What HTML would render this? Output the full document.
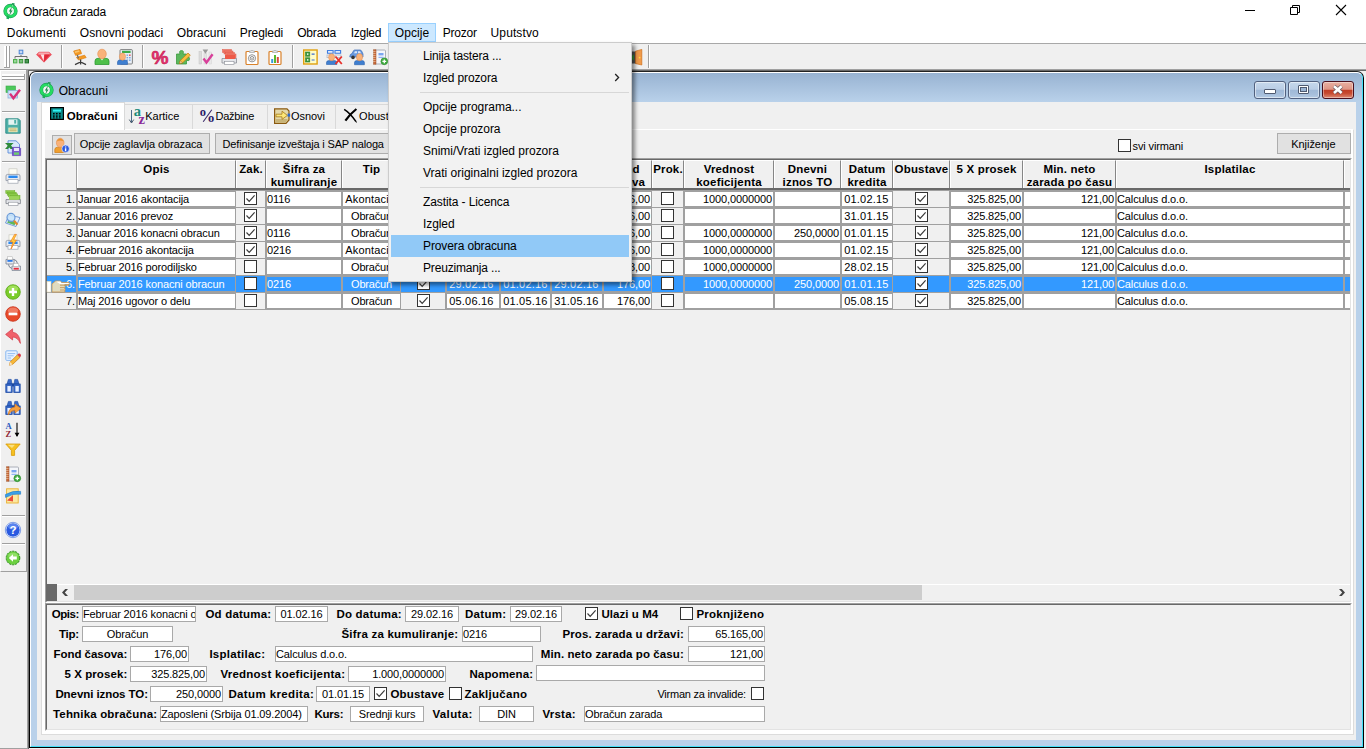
<!DOCTYPE html><html><head><meta charset="utf-8"><title>Obračun zarada</title><style>
*{box-sizing:border-box}
html,body{margin:0;padding:0}
body{width:1366px;height:749px;position:relative;overflow:hidden;background:#f0f0f0;font-family:"Liberation Sans",sans-serif;color:#000;font-size:11px}
.a{position:absolute}
.t{position:absolute;white-space:nowrap;font-size:11px;line-height:14px;height:14px;letter-spacing:-.12px}
.s{position:absolute;white-space:nowrap;font-size:12px;line-height:16px;height:16px;letter-spacing:-.1px}
.b{font-weight:bold;font-size:11.5px;letter-spacing:.18px}
.r{text-align:right}
.c{text-align:center}
.w{color:#fff}
.ic{position:absolute;width:16px;height:16px;overflow:visible}
.inp{position:absolute;background:#fff;border:1px solid #a9a9a9;height:16px}
.cb{position:absolute;width:13px;height:13px;background:#fff;border:1px solid #333}
.btn{position:absolute;background:#e1e1e1;border:1px solid #adadad}
.hc{position:absolute;top:160px;height:28px;background:#f0f0f0;border-left:1px solid #fff;border-top:1px solid #fff;border-right:1px solid #868686}
.hl{position:absolute;left:-4px;right:-4px;text-align:center;font-weight:bold;font-size:11.5px;letter-spacing:.18px;line-height:13px;white-space:nowrap}
.cell{position:absolute;height:14px;background:#fff}
.sel{background:#3399ff;color:#fff}
.mi{position:absolute;left:3px;width:238px;height:22px;line-height:22px;font-size:12px;padding-left:32px;white-space:nowrap;letter-spacing:-.1px}
</style></head><body>
<div class="a" style="left:0;top:0;width:1366px;height:43px;background:#fff"></div>
<div class="a" style="left:0;top:43px;width:1366px;height:1px;background:#a8a8a8"></div>
<svg class="ic" style="left:3px;top:3px;width:16px" width="16" height="16" viewBox="0 0 16 16"><circle cx="7.5" cy="8" r="5.2" fill="none" stroke="#1f9d57" stroke-width="3.9"/><circle cx="7.5" cy="8" r="5.2" fill="none" stroke="#25dc62" stroke-width="2.7"/><ellipse cx="7.5" cy="8" rx="3.2" ry="3.7" fill="#f4f8f4"/><path d="M8.9 0 L11.6 0.2 L11.2 4 L8.6 2.6Z" fill="#1f9d57"/><path d="M9.6 1.4 L10.8 3.4 L8.6 3.6Z" fill="#7ff0a0"/><path d="M6 16.2 L3.4 15.8 L3.8 12 L6.4 13.6Z" fill="#1fae5a"/><path d="M9 3.6 L5.8 8.4 L7.4 8.4 L6.2 12.8 L9.6 7.4 L8 7.4Z" fill="#2a8a54"/></svg>
<div class="s " style="left:23px;top:4px;letter-spacing:-0.225px;">Obračun zarada</div>
<svg class="a" style="left:1230px;top:0" width="136" height="22" viewBox="0 0 136 22"><path d="M15 10.5h10" stroke="#000" stroke-width="1"/><path d="M60.5 7.5h7v7h-7z M62.5 7.5v-2h7v7h-2" fill="none" stroke="#000" stroke-width="1"/><path d="M106 5l10 10M116 5l-10 10" stroke="#000" stroke-width="1.1"/></svg>
<div class="a" style="left:388px;top:23px;width:48px;height:19px;background:#cce8ff;border:1px solid #99d1ff"></div>
<div class="s " style="left:6.8px;top:25px;letter-spacing:0.216px;">Dokumenti</div>
<div class="s " style="left:79.8px;top:25px;letter-spacing:0.042px;">Osnovni podaci</div>
<div class="s " style="left:176.8px;top:25px;letter-spacing:0.076px;">Obracuni</div>
<div class="s " style="left:239.8px;top:25px;letter-spacing:-0.091px;">Pregledi</div>
<div class="s " style="left:297.2px;top:25px;letter-spacing:-0.187px;">Obrada</div>
<div class="s " style="left:350.8px;top:25px;letter-spacing:-0.287px;">Izgled</div>
<div class="s " style="left:394.8px;top:25px;letter-spacing:0.081px;">Opcije</div>
<div class="s " style="left:442.7px;top:25px;letter-spacing:-0.190px;">Prozor</div>
<div class="s " style="left:490.6px;top:25px;letter-spacing:0.106px;">Uputstvo</div>
<div class="a" style="left:0;top:44px;width:1366px;height:26px;background:#f0f0f0"></div>
<div class="a" style="left:4px;top:46px;width:3px;height:22px;background:#fff;border-right:1px solid #a0a0a0;border-bottom:1px solid #a0a0a0"></div>
<div class="a" style="left:7px;top:46px;width:3px;height:22px;background:#fff;border-right:1px solid #a0a0a0;border-bottom:1px solid #a0a0a0"></div>
<svg class="ic" style="left:13px;top:49px;width:16px" width="16" height="16" viewBox="0 0 16 16"><rect x="6.2" y="1.2" width="3.6" height="3.6" fill="#c8d8f4" stroke="#4a86d6" stroke-width="1"/><path d="M8 6v1.5M2 9.6V7.5h12V9.6" fill="none" stroke="#707070" stroke-width="1"/><rect x="0.5" y="10.5" width="3.4" height="3.4" fill="#9ad89a" stroke="#4cae4c" stroke-width="1"/><rect x="6.3" y="10.5" width="3.4" height="3.4" fill="#7cc47c" stroke="#3c9a3c" stroke-width="1"/><rect x="12.1" y="10.5" width="3.4" height="3.4" fill="#4c9a54" stroke="#1d7028" stroke-width="1"/></svg>
<svg class="ic" style="left:36px;top:49px;width:16px" width="16" height="16" viewBox="0 0 16 16"><path d="M0.5 5.6 L3 3.2 L13 3.2 L15.5 5.6 L8 13.2 Z" fill="#f04a55" stroke="#e84050" stroke-width=".6"/><path d="M3.2 3.6 L12.8 3.6 L14.4 5.4 L1.6 5.4Z" fill="#f8a8ae"/><path d="M4.6 5.4 L7.6 12 L8.4 5.4Z" fill="#fde4e6"/><path d="M8.4 5.4 L8 12.4 L14 5.6Z" fill="#e02838"/></svg>
<div class="a" style="left:61px;top:45px;width:1px;height:23px;background:#a0a0a0"></div><div class="a" style="left:62px;top:45px;width:1px;height:23px;background:#fff"></div>
<svg class="ic" style="left:72px;top:49px;width:16px" width="16" height="16" viewBox="0 0 16 16"><path d="M1.6 2 L8 0.4 L9.6 4.6 L3.6 6.4Z" fill="#f59a23" stroke="#d97400" stroke-width=".6"/><path d="M2.6 2.4 L7 1.2 L7.6 2.8 L3.2 4Z" fill="#fbc46a"/><path d="M4.4 8.4 L12.6 6.2 L14.2 8.6 L6.6 11Z" fill="#f59a23" stroke="#d97400" stroke-width=".6"/><path d="M8.6 10.6v2.6M3 15.6 L8.6 13 L14 15.6M8.6 13v2.6" fill="none" stroke="#3a3a3a" stroke-width="1.3"/><path d="M5.4 6 L6.4 9.4" stroke="#666" stroke-width="1.2"/></svg>
<svg class="ic" style="left:94px;top:49px;width:16px" width="16" height="16" viewBox="0 0 16 16"><path d="M1 15.5 V12 Q1 9.5 4 9.3 L12 9.3 Q15 9.5 15 12 V15.5Z" fill="#4fc04a" stroke="#2e9a35" stroke-width=".8"/><path d="M6.5 9.3 L8 11.5 L9.5 9.3Z" fill="#fff"/><ellipse cx="8" cy="5" rx="4.3" ry="4.8" fill="#f9b27a" stroke="#e58f4f" stroke-width=".6"/></svg>
<svg class="ic" style="left:117px;top:49px;width:16px" width="16" height="16" viewBox="0 0 16 16"><rect x="3" y="0.6" width="12.4" height="14.4" rx="1" fill="#e8eef6" stroke="#666" stroke-width=".8"/><rect x="5" y="1.8" width="8.6" height="2.2" fill="#3aaa4a"/><g fill="#7aa6e0"><rect x="9.5" y="5.5" width="1.6" height="1.4"/><rect x="12" y="5.5" width="1.6" height="1.4" fill="#e05050"/><rect x="9.5" y="8" width="1.6" height="1.4"/><rect x="12" y="8" width="1.6" height="1.4"/><rect x="9.5" y="10.5" width="1.6" height="1.4"/><rect x="12" y="10.5" width="1.6" height="1.4"/></g><path d="M0.5 15.5 V13 Q0.5 11 3 11 L8 11 Q10.5 11 10.5 13 V15.5Z" fill="#3f7fd0" stroke="#2b62ad" stroke-width=".6"/><ellipse cx="5.5" cy="7.6" rx="3.1" ry="3.6" fill="#f9b27a" stroke="#e58f4f" stroke-width=".5"/></svg>
<div class="a" style="left:142px;top:45px;width:1px;height:23px;background:#a0a0a0"></div><div class="a" style="left:143px;top:45px;width:1px;height:23px;background:#fff"></div>
<svg class="ic" style="left:152px;top:49px;width:16px" width="16" height="16" viewBox="0 0 16 16"><text x="8" y="14.5" font-family="Liberation Sans,sans-serif" font-weight="bold" font-size="18" text-anchor="middle" fill="#e8336f" stroke="#c01850" stroke-width=".5" textLength="17" lengthAdjust="spacingAndGlyphs">%</text></svg>
<svg class="ic" style="left:175px;top:49px;width:16px" width="16" height="16" viewBox="0 0 16 16"><path d="M1.5 5 H5 Q3.6 1.6 6.5 1.6 Q9.4 1.6 8 5 H11.5 V8.2 Q14.6 7 14.6 9.8 Q14.6 12.6 11.5 11.4 V15 H1.5Z" fill="#5cb85c" stroke="#3d9a40" stroke-width=".8"/><path d="M4.5 14.5 L5.3 11.6 L13 4 L15.3 6.3 L7.6 13.8Z" fill="#f6c040" stroke="#c07a10" stroke-width=".7"/><path d="M4.5 14.5 L5.3 11.6 L7.6 13.8Z" fill="#f8e0b0" stroke="#a06010" stroke-width=".5"/></svg>
<svg class="ic" style="left:198px;top:49px;width:16px" width="16" height="16" viewBox="0 0 16 16"><rect x="1" y="2.5" width="2.6" height="12.5" fill="#dcdcdc" stroke="#c4c4c4" stroke-width=".5"/><rect x="6" y="4" width="2.6" height="11" fill="#e4e4e4" stroke="#cfcfcf" stroke-width=".5"/><rect x="11" y="3" width="2.6" height="12" fill="#e8e8e8" stroke="#d4d4d4" stroke-width=".5"/><path d="M4.6 0.5 H10.2 L7.4 4.8Z" fill="#9a9a9a"/><path d="M5.5 9.5 L8.5 13.5 L14.6 5.2" fill="none" stroke="#d8409a" stroke-width="2.4"/></svg>
<svg class="ic" style="left:221px;top:49px;width:16px" width="16" height="16" viewBox="0 0 16 16"><g fill="#f07a6a" stroke="#e05a48" stroke-width=".5"><rect x="1.5" y="0.5" width="9" height="3"/><rect x="3" y="2" width="9" height="3"/><rect x="4.5" y="3.5" width="9" height="3"/><rect x="6" y="5" width="9" height="5"/></g><path d="M1 9.5 H15.5 V14 H1Z" fill="#e4e6ea" stroke="#8a8e96" stroke-width=".8"/><rect x="3.5" y="12.3" width="9.5" height="3" fill="#fff" stroke="#8a8e96" stroke-width=".6"/><rect x="4" y="6" width="10" height="4" fill="#ee5a48"/></svg>
<svg class="ic" style="left:244px;top:49px;width:16px" width="16" height="16" viewBox="0 0 16 16"><rect x="2" y="2.5" width="12" height="13" rx="1" fill="#fff" stroke="#d9822b" stroke-width="1.2"/><path d="M5.5 3.5 V2 H7 Q8 0 9 2 H10.5 V3.5Z" fill="#e8e8e8" stroke="#999" stroke-width=".6"/><circle cx="8" cy="9.3" r="3.6" fill="none" stroke="#777" stroke-width=".8"/><circle cx="8" cy="9.3" r="1.8" fill="none" stroke="#777" stroke-width=".8"/><circle cx="8" cy="9.3" r=".6" fill="#777"/></svg>
<svg class="ic" style="left:267px;top:49px;width:16px" width="16" height="16" viewBox="0 0 16 16"><rect x="2" y="2.5" width="12" height="13" rx="1" fill="#fff" stroke="#d9822b" stroke-width="1.2"/><path d="M5.5 3.5 V2 H7 Q8 0 9 2 H10.5 V3.5Z" fill="#e8e8e8" stroke="#999" stroke-width=".6"/><rect x="4.2" y="10" width="2" height="4" fill="#3a9ad8"/><rect x="7" y="6" width="2" height="8" fill="#5cb82c"/><rect x="9.8" y="8" width="2" height="6" fill="#d84a3a"/></svg>
<div class="a" style="left:292px;top:45px;width:1px;height:23px;background:#a0a0a0"></div><div class="a" style="left:293px;top:45px;width:1px;height:23px;background:#fff"></div>
<svg class="ic" style="left:303px;top:49px;width:16px" width="16" height="16" viewBox="0 0 16 16"><rect x="0.7" y="1" width="13.4" height="14" fill="#fffdc8" stroke="#e0a010" stroke-width="1.4"/><rect x="2.6" y="3" width="4.2" height="4.2" fill="#3c9a3c" stroke="#2a7a2a" stroke-width=".6"/><rect x="2.6" y="8.8" width="4.2" height="4.2" fill="#3c9a3c" stroke="#2a7a2a" stroke-width=".6"/><rect x="4" y="4.4" width="1.4" height="1.4" fill="#fff"/><rect x="4" y="10.2" width="1.4" height="1.4" fill="#fff"/><path d="M8.6 5.2h3M8.6 11h3" stroke="#3a6ad0" stroke-width="1.2"/></svg>
<svg class="ic" style="left:326px;top:49px;width:16px" width="16" height="16" viewBox="0 0 16 16"><g fill="#fff" stroke="#3a7ae0" stroke-width="1.1"><rect x="1.5" y="1.6" width="5.6" height="2.6"/><rect x="9" y="1.6" width="5.6" height="2.6"/></g><g fill="#f4f4f4" stroke="#b0b8c8" stroke-width=".8"><rect x="1" y="6" width="6" height="2.6"/><rect x="9" y="6" width="6" height="2.6"/></g><path d="M0.5 15.5 V13.4 Q0.5 11.6 3 11.6 L8.4 11.6 Q10.8 11.6 10.8 13.4 V15.5Z" fill="#3f7fd0" stroke="#2b62ad" stroke-width=".6"/><ellipse cx="5.6" cy="8.2" rx="3" ry="3.5" fill="#f9b27a" stroke="#e58f4f" stroke-width=".5"/><path d="M9.5 7.5 L15.8 15 M15.8 7.5 L9.5 15" stroke="#e8302a" stroke-width="1.8"/></svg>
<svg class="ic" style="left:349px;top:49px;width:16px" width="16" height="16" viewBox="0 0 16 16"><path d="M0.8 7.5 Q0.8 5 3 4.6 L4.6 1.6 Q5 1 6 1 L11 1 Q12 1 12.6 2 L14 5 V8 H0.8Z" fill="#6a9ae0" stroke="#3a6ab8" stroke-width=".7"/><path d="M5 4.2 L6 2.2 H8 V4.2Z M9 4.2 V2.2 H11 L12 4.2Z" fill="#d8e6fa"/><circle cx="4" cy="8.4" r="1.8" fill="#333"/><path d="M5.5 15.7 V13.4 Q5.5 11.6 8 11.6 L13 11.6 Q15.4 11.6 15.4 13.4 V15.7Z" fill="#3f7fd0" stroke="#2b62ad" stroke-width=".6"/><ellipse cx="10.5" cy="8.2" rx="3.1" ry="3.6" fill="#f9b27a" stroke="#e58f4f" stroke-width=".5"/></svg>
<svg class="ic" style="left:372px;top:49px;width:16px" width="16" height="16" viewBox="0 0 16 16"><rect x="2.5" y="1" width="11" height="14" rx="1" fill="#f4f6fa" stroke="#9aa0a8" stroke-width=".8"/><rect x="1.6" y="0.8" width="2.4" height="14.4" fill="#c86a3a" stroke="#9a4a20" stroke-width=".5"/><path d="M1 2.5h2.6M1 4.5h2.6M1 6.5h2.6M1 8.5h2.6M1 10.5h2.6M1 12.5h2.6" stroke="#f0d0b0" stroke-width=".6"/><rect x="6.5" y="4" width="5" height="2.4" fill="#7aa6f0"/><path d="M6.5 8.3h5" stroke="#7aa6f0" stroke-width="1"/><circle cx="12.3" cy="12.3" r="3.4" fill="#3faa3f" stroke="#2a8a2a" stroke-width=".6"/><path d="M10.4 12.3h3.8M12.3 10.4v3.8" stroke="#fff" stroke-width="1.3"/></svg>
<svg class="ic" style="left:626px;top:49px;width:16px" width="16" height="16" viewBox="0 0 16 16"><rect x="3" y="2.5" width="8" height="12" fill="#555"/><path d="M3 8.5 L8 5.5 V11.5Z" fill="#3a9a3a"/><path d="M9.5 2.2 L15.8 0.4 V16 L9.5 14.6Z" fill="#f09a4a" stroke="#d0701a" stroke-width=".7"/><circle cx="13.6" cy="8.6" r=".9" fill="#ffd840"/></svg>
<div class="a" style="left:648px;top:45px;width:1px;height:23px;background:#a0a0a0"></div><div class="a" style="left:649px;top:45px;width:1px;height:23px;background:#fff"></div>
<div class="a" style="left:0;top:69px;width:27px;height:680px;background:#f0f0f0"></div>
<div class="a" style="left:0;top:69px;width:27px;height:503px;border-left:1px solid #fff;border-right:1px solid #a0a0a0;border-bottom:1px solid #a0a0a0"></div>
<div class="a" style="left:0;top:69px;width:27px;height:1px;background:#a0a0a0"></div><div class="a" style="left:0;top:70px;width:26px;height:1px;background:#fff"></div>
<div class="a" style="left:2px;top:74px;width:23px;height:3px;background:#fff;border-right:1px solid #a0a0a0;border-bottom:1px solid #a0a0a0"></div>
<div class="a" style="left:2px;top:77px;width:23px;height:3px;background:#fff;border-right:1px solid #a0a0a0;border-bottom:1px solid #a0a0a0"></div>
<svg class="ic" style="left:5px;top:85px;width:16px" width="16" height="16" viewBox="0 0 16 16"><rect x="1" y="1" width="9.5" height="6.5" fill="#4cc85a" stroke="#3aa848" stroke-width=".6"/><rect x="3" y="5.5" width="9.5" height="7.5" fill="#cfe4f8" stroke="#8ab0dc" stroke-width=".8"/><path d="M5 8.6 L8.4 13.2 L15 4.8" fill="none" stroke="#d8307a" stroke-width="2.4"/></svg>
<div class="a" style="left:2px;top:111px;width:23px;height:1px;background:#a0a0a0"></div><div class="a" style="left:2px;top:112px;width:23px;height:1px;background:#fff"></div>
<svg class="ic" style="left:5px;top:118px;width:16px" width="16" height="16" viewBox="0 0 16 16"><path d="M0.8 0.8 H13.4 L15.2 2.6 V15.2 H0.8Z" fill="#4fb0a8" stroke="#2a8a84" stroke-width=".9"/><rect x="3.4" y="1.4" width="9" height="5.4" fill="#e4f4f2"/><rect x="9.2" y="2" width="2" height="3.6" fill="#4fb0a8"/><rect x="3.4" y="9.6" width="9.2" height="4.6" fill="#f0ecc0"/><path d="M4.4 11h7.2M4.4 12.8h7.2" stroke="#b0a860" stroke-width=".9"/></svg>
<svg class="ic" style="left:5px;top:140px;width:16px" width="16" height="16" viewBox="0 0 16 16"><path d="M3 0.8 H11 L14.5 4.2 V13 H3Z" fill="#d8e8fa" stroke="#5a8ad8" stroke-width=".9"/><path d="M0 3 H8.6 L6 5.6 L9 9 H5.6 L4.3 7.4 L2.8 9 H0 L2.8 5.8Z" fill="#2f8a3a"/><path d="M7.4 7.4 H14.6 L15.6 8.4 V15.6 H7.4Z" fill="#7a5ad0" stroke="#5a3ab0" stroke-width=".7"/><rect x="9" y="8" width="5" height="3" fill="#e8e4fa"/><rect x="9" y="12.4" width="5" height="2.4" fill="#6cd06c"/></svg>
<div class="a" style="left:2px;top:161px;width:23px;height:1px;background:#a0a0a0"></div><div class="a" style="left:2px;top:162px;width:23px;height:1px;background:#fff"></div>
<svg class="ic" style="left:5px;top:168px;width:16px" width="16" height="16" viewBox="0 0 16 16"><rect x="4" y="0.8" width="8" height="7" fill="#fdfdf4" stroke="#c8c8c0" stroke-width=".7"/><path d="M1 8 Q1 6.4 2.6 6.4 H13.4 Q15 6.4 15 8 V12.6 H1Z" fill="#e8eaf0" stroke="#8a92a0" stroke-width=".8"/><rect x="3.4" y="7.6" width="9.2" height="2.4" fill="#2a8af0"/><rect x="3" y="11.4" width="10" height="3.8" fill="#fff" stroke="#9aa0ac" stroke-width=".7"/></svg>
<svg class="ic" style="left:5px;top:190px;width:16px" width="16" height="16" viewBox="0 0 16 16"><g fill="#8ccc4a" stroke="#6aaa2a" stroke-width=".5"><rect x="0.8" y="0.6" width="9" height="3"/><rect x="2.2" y="2.2" width="9" height="3"/><rect x="3.6" y="3.8" width="9" height="3"/><rect x="5" y="5.4" width="10" height="5"/></g><path d="M1 9.6 H15.4 V13.6 H1Z" fill="#e4e6ea" stroke="#7a7e86" stroke-width=".8"/><rect x="3.4" y="12.2" width="9.6" height="3.2" fill="#fff" stroke="#8a8e96" stroke-width=".6"/><rect x="4" y="6.2" width="10" height="3.6" fill="#9cd45a"/></svg>
<svg class="ic" style="left:5px;top:212px;width:16px" width="16" height="16" viewBox="0 0 16 16"><path d="M4 3 L15 5.5 L11 14.5 L0.5 11Z" fill="#e4eefc" stroke="#5a8ad0" stroke-width=".8"/><path d="M2 10.6 L9.6 13.2 L11 10 L4 8Z" fill="#5cb85c"/><circle cx="6" cy="5.4" r="4" fill="#c8e4fa" stroke="#6a9ad8" stroke-width="1.2" fill-opacity=".85"/><path d="M9 8.6 L12.4 12.6" stroke="#e08a2a" stroke-width="2.2"/></svg>
<svg class="ic" style="left:5px;top:234px;width:16px" width="16" height="16" viewBox="0 0 16 16"><rect x="4" y="0.8" width="8" height="7" fill="#fdfdf4" stroke="#c8c8c0" stroke-width=".7"/><path d="M1 8 Q1 6.4 2.6 6.4 H13.4 Q15 6.4 15 8 V12.6 H1Z" fill="#e8eaf0" stroke="#8a92a0" stroke-width=".8"/><rect x="3.4" y="7.6" width="9.2" height="2.4" fill="#2a8af0"/><rect x="3" y="11.4" width="10" height="3.8" fill="#fff" stroke="#9aa0ac" stroke-width=".7"/><path d="M9.6 0.4 L5.4 8 H8 L6 15 L11.4 6 H8.6 L11.4 0.4Z" fill="#ffd040" stroke="#f07a1a" stroke-width=".7"/></svg>
<svg class="ic" style="left:5px;top:256px;width:16px" width="16" height="16" viewBox="0 0 16 16"><path d="M1 3.4 H9 V8 H1Z" fill="#e8eaf0" stroke="#7a8290" stroke-width=".8"/><rect x="2.6" y="0.8" width="4.8" height="3" fill="#fff" stroke="#aaa" stroke-width=".5"/><rect x="2.4" y="4" width="5.2" height="1.8" fill="#2a7ae8"/><path d="M7 10 H15.4 V14.4 H7Z" fill="#e8eaf0" stroke="#7a8290" stroke-width=".8"/><rect x="8.6" y="7.6" width="5" height="2.8" fill="#fff" stroke="#aaa" stroke-width=".5"/><rect x="8.6" y="11.8" width="5.2" height="1.8" fill="#e82a3a"/><path d="M3.4 8.4 Q4 12 7 12.4 M9 3.6 Q12 4 12.4 7.4" fill="none" stroke="#7a8290" stroke-width="1"/></svg>
<svg class="ic" style="left:5px;top:284px;width:16px" width="16" height="16" viewBox="0 0 16 16"><circle cx="8" cy="8" r="7.3" fill="#7acc2a" stroke="#5aa818" stroke-width=".8"/><ellipse cx="8" cy="4.6" rx="5.2" ry="3" fill="#b4e870" fill-opacity=".7"/><path d="M4 8h8M8 4v8" stroke="#fff" stroke-width="2.4"/></svg>
<svg class="ic" style="left:5px;top:306px;width:16px" width="16" height="16" viewBox="0 0 16 16"><circle cx="8" cy="8" r="7.3" fill="#e84a2a" stroke="#c83018" stroke-width=".8"/><ellipse cx="8" cy="4.6" rx="5.2" ry="3" fill="#f4907a" fill-opacity=".7"/><path d="M3.6 8h8.8" stroke="#fff" stroke-width="2.6"/></svg>
<svg class="ic" style="left:5px;top:328px;width:16px" width="16" height="16" viewBox="0 0 16 16"><path d="M0.6 6.4 L7.6 0.8 V4.2 Q15 5 15.4 15.4 Q12.4 9 7.6 9 V12Z" fill="#f0606a" stroke="#d03a48" stroke-width=".7"/></svg>
<svg class="ic" style="left:5px;top:350px;width:16px" width="16" height="16" viewBox="0 0 16 16"><rect x="0.8" y="0.8" width="11.4" height="9.6" rx="1" fill="#e8f2fe" stroke="#7ab0f0" stroke-width=".9"/><path d="M2.6 3.6h7.6M2.6 5.8h6M2.6 8h3.4" stroke="#8ab8f0" stroke-width=".9"/><path d="M4.4 15.2 L5.2 12 L12.4 4.8 L15 7.4 L7.6 14.4Z" fill="#f6b83a" stroke="#c8801a" stroke-width=".7"/><path d="M12.4 4.8 L13.6 3.6 Q14.8 3 15.6 4.2 Q16.4 5.4 15.6 6.4 L15 7.4Z" fill="#d83a4a"/><path d="M4.4 15.2 L5.2 12 L7.6 14.4Z" fill="#f8e4c0"/></svg>
<svg class="ic" style="left:5px;top:378px;width:16px" width="16" height="16" viewBox="0 0 16 16"><path d="M2 6 L3.4 1.4 H6.2 L7 6Z M9 6 L9.8 1.4 H12.6 L14 6Z" fill="#3a6ac8" stroke="#1a48a0" stroke-width=".6"/><rect x="0.8" y="6" width="6.4" height="8.6" fill="#3a6ac8" stroke="#1a48a0" stroke-width=".7"/><rect x="8.8" y="6" width="6.4" height="8.6" fill="#3a6ac8" stroke="#1a48a0" stroke-width=".7"/><rect x="7" y="5.4" width="2" height="3" fill="#1a48a0"/><rect x="2.4" y="8" width="3.4" height="5.6" fill="#e8f0ff"/><rect x="10.4" y="8" width="3.4" height="5.6" fill="#e8f0ff"/></svg>
<svg class="ic" style="left:5px;top:400px;width:16px" width="16" height="16" viewBox="0 0 16 16"><path d="M2 6 L3.4 1.4 H6.2 L7 6Z M9 6 L9.8 1.4 H12.6 L14 6Z" fill="#3a6ac8" stroke="#1a48a0" stroke-width=".6"/><rect x="0.8" y="6" width="6.4" height="8.6" fill="#3a6ac8" stroke="#1a48a0" stroke-width=".7"/><rect x="8.8" y="6" width="6.4" height="8.6" fill="#3a6ac8" stroke="#1a48a0" stroke-width=".7"/><rect x="7" y="5.4" width="2" height="3" fill="#1a48a0"/><rect x="2.4" y="8" width="3.4" height="5.6" fill="#e8f0ff"/><rect x="10.4" y="8" width="3.4" height="5.6" fill="#e8f0ff"/><path d="M3.2 15 Q3.6 7.6 10 7 V4 L15.8 8.6 L10 13 V10.2 Q6 10 3.2 15Z" fill="#f6a040" stroke="#d87a1a" stroke-width=".7"/></svg>
<svg class="ic" style="left:5px;top:422px;width:16px" width="16" height="16" viewBox="0 0 16 16"><text x="0.4" y="7" font-family="Liberation Serif,serif" font-weight="bold" font-size="8.5" fill="#2a5ac0">A</text><text x="0.6" y="15.4" font-family="Liberation Serif,serif" font-weight="bold" font-size="8.5" fill="#902838">Z</text><path d="M12 0.8 V14" stroke="#000" stroke-width="1.1"/><path d="M9.6 10.8 L12 15 L14.4 10.8Z" fill="#000"/></svg>
<svg class="ic" style="left:5px;top:443px;width:16px" width="16" height="16" viewBox="0 0 16 16"><path d="M0.8 1 H15.2 L9.6 7.4 V12.4 H6.4 V7.4Z" fill="#f6c020" stroke="#d89a08" stroke-width=".8"/><path d="M2.8 1.8 H10 L7 5Z" fill="#fbe080"/></svg>
<svg class="ic" style="left:5px;top:466px;width:16px" width="16" height="16" viewBox="0 0 16 16"><rect x="2.5" y="1" width="11" height="14" rx="1" fill="#f4f6fa" stroke="#9aa0a8" stroke-width=".8"/><rect x="1.6" y="0.8" width="2.4" height="14.4" fill="#c86a3a" stroke="#9a4a20" stroke-width=".5"/><path d="M1 2.5h2.6M1 4.5h2.6M1 6.5h2.6M1 8.5h2.6M1 10.5h2.6M1 12.5h2.6" stroke="#f0d0b0" stroke-width=".6"/><rect x="6.5" y="4" width="5" height="2.4" fill="#7aa6f0"/><path d="M6.5 8.3h5" stroke="#7aa6f0" stroke-width="1"/><circle cx="12.3" cy="12.3" r="3.4" fill="#3faa3f" stroke="#2a8a2a" stroke-width=".6"/><path d="M10.4 12.3h3.8M12.3 10.4v3.8" stroke="#fff" stroke-width="1.3"/></svg>
<svg class="ic" style="left:5px;top:488px;width:16px" width="16" height="16" viewBox="0 0 16 16"><rect x="1.6" y="0.8" width="11.6" height="14.2" fill="#fbe8a0" stroke="#e8b030" stroke-width=".9"/><path d="M2 12.4 L8 7 V13.6Z" fill="#e84a3a"/><path d="M0.4 6.6 Q8 2 15.6 3.4 L15.6 6.2 Q8 5 0.6 9.4Z" fill="#3aa0e8" stroke="#1a78c8" stroke-width=".6"/></svg>
<div class="a" style="left:2px;top:515px;width:23px;height:1px;background:#a0a0a0"></div><div class="a" style="left:2px;top:516px;width:23px;height:1px;background:#fff"></div>
<svg class="ic" style="left:5px;top:522px;width:16px" width="16" height="16" viewBox="0 0 16 16"><circle cx="8" cy="8" r="7.2" fill="#2a5ae0" stroke="#e8f0ff" stroke-width="1"/><circle cx="8" cy="8" r="7.7" fill="none" stroke="#3a6ad8" stroke-width=".6"/><ellipse cx="8" cy="4.6" rx="5" ry="2.8" fill="#7aa0f8" fill-opacity=".6"/><text x="8" y="12.2" font-family="Liberation Sans,sans-serif" font-weight="bold" font-size="11.5" text-anchor="middle" fill="#fff">?</text></svg>
<div class="a" style="left:2px;top:543px;width:23px;height:1px;background:#a0a0a0"></div><div class="a" style="left:2px;top:544px;width:23px;height:1px;background:#fff"></div>
<svg class="ic" style="left:5px;top:550px;width:16px" width="16" height="16" viewBox="0 0 16 16"><circle cx="8" cy="8" r="6.8" fill="#6cd040" stroke="#2a8a1a" stroke-width="1" stroke-dasharray="2.2 .9"/><ellipse cx="8" cy="5.4" rx="4.6" ry="2.6" fill="#a8ea80" fill-opacity=".6"/><path d="M3.8 8 L8 4.2 V6.6 H11.8 V9.4 H8 V11.8Z" fill="#fff"/></svg>
<div class="a" style="left:0;top:748px;width:28px;height:1px;background:#a0a0a0"></div>
<div class="a" style="left:27px;top:69px;width:1339px;height:1px;background:#a0a0a0"></div>
<div class="a" style="left:28px;top:70px;width:1338px;height:1px;background:#696969"></div>
<div class="a" style="left:27px;top:69px;width:1px;height:680px;background:#a0a0a0"></div>
<div class="a" style="left:28px;top:70px;width:1px;height:679px;background:#696969"></div>
<div class="a" style="left:29px;top:71px;width:1337px;height:678px;background:#f0f0f0"></div>
<div class="a" style="left:29px;top:71px;width:1335px;height:677px;background:#b9d1ea;border:1px solid #000;border-top-color:#222;border-radius:7px 7px 0 0;overflow:hidden"><div class="a" style="left:1px;top:1px;width:1331px;height:29px;background:linear-gradient(#98b3d2,#b9d1ea);border-radius:5px 5px 0 0"></div><div class="a" style="left:0;top:0;width:1333px;height:675px;border:1px solid #fff;border-right-color:#42e0f8;border-bottom-color:#42e0f8;border-radius:6px 6px 0 0"></div></div>
<svg class="ic" style="left:39px;top:82px;width:16px" width="16" height="16" viewBox="0 0 16 16"><circle cx="7.5" cy="8" r="5.2" fill="none" stroke="#1f9d57" stroke-width="3.9"/><circle cx="7.5" cy="8" r="5.2" fill="none" stroke="#25dc62" stroke-width="2.7"/><ellipse cx="7.5" cy="8" rx="3.2" ry="3.7" fill="#f4f8f4"/><path d="M8.9 0 L11.6 0.2 L11.2 4 L8.6 2.6Z" fill="#1f9d57"/><path d="M9.6 1.4 L10.8 3.4 L8.6 3.6Z" fill="#7ff0a0"/><path d="M6 16.2 L3.4 15.8 L3.8 12 L6.4 13.6Z" fill="#1fae5a"/><path d="M9 3.6 L5.8 8.4 L7.4 8.4 L6.2 12.8 L9.6 7.4 L8 7.4Z" fill="#2a8a54"/></svg>
<div class="s " style="left:58.7px;top:83px;letter-spacing:0.076px;">Obracuni</div>
<div class="a" style="left:1254px;top:81px;width:32px;height:18px;border:1px solid #52617f;border-radius:3px;background:linear-gradient(#c6d8ec 0,#bacde5 46%,#a0b9d7 50%,#a6bedb 75%,#b4cae3 100%);box-shadow:inset 0 0 0 1px rgba(255,255,255,.5)"></div>
<div class="a" style="left:1264px;top:89px;width:12px;height:5px;background:#fff;border:1px solid #4f5a70;border-radius:1px"></div>
<div class="a" style="left:1288px;top:81px;width:32px;height:18px;border:1px solid #52617f;border-radius:3px;background:linear-gradient(#c6d8ec 0,#bacde5 46%,#a0b9d7 50%,#a6bedb 75%,#b4cae3 100%);box-shadow:inset 0 0 0 1px rgba(255,255,255,.5)"></div>
<div class="a" style="left:1298px;top:85px;width:11px;height:9px;background:#fff;border:1px solid #4f5a70;border-radius:1px"></div>
<div class="a" style="left:1300px;top:87px;width:7px;height:5px;background:#9ab4d4;border:1px solid #4f5a70"></div>
<div class="a" style="left:1322px;top:81px;width:32px;height:18px;border:1px solid #4a0f1c;border-radius:3px;background:linear-gradient(#e8b0a2 0,#de9484 46%,#c13c24 50%,#c6482f 70%,#dc8a74 100%);box-shadow:inset 0 0 0 1px rgba(255,255,255,.4)"></div>
<svg class="a" style="left:1331px;top:84px" width="14" height="12" viewBox="0 0 14 12"><path d="M3 2.2 L10.6 9 M10.6 2.2 L3 9" stroke="#6a5a62" stroke-width="4" stroke-linecap="butt"/><path d="M3 2.2 L10.6 9 M10.6 2.2 L3 9" stroke="#fff" stroke-width="2.5" stroke-linecap="butt"/></svg>
<div class="a" style="left:37px;top:102px;width:1319px;height:638px;background:#f0f0f0"></div>
<div class="a" style="left:41px;top:129px;width:1313px;height:606px;background:#fff;border:1px solid #dcdcdc;border-top-color:#fff"></div>
<div class="a" style="left:45px;top:130px;width:1306px;height:601px;background:#f0f0f0"></div>
<div class="a" style="left:124px;top:104px;width:69px;height:25px;background:#f0f0f0;border:1px solid #d9d9d9;border-bottom:none"></div>
<div class="a" style="left:192px;top:104px;width:76px;height:25px;background:#f0f0f0;border:1px solid #d9d9d9;border-bottom:none"></div>
<div class="a" style="left:267px;top:104px;width:69px;height:25px;background:#f0f0f0;border:1px solid #d9d9d9;border-bottom:none"></div>
<div class="a" style="left:335px;top:104px;width:86px;height:25px;background:#f0f0f0;border:1px solid #d9d9d9;border-bottom:none"></div>
<div class="a" style="left:41px;top:102px;width:84px;height:28px;background:#fff;border:1px solid #d9d9d9;border-bottom:none"></div>
<svg class="ic" style="left:50px;top:107px;width:16px" width="16" height="16" viewBox="0 0 16 16"><rect x="0.6" y="0.6" width="12.8" height="11.8" fill="#0a8a8a" stroke="#000" stroke-width="1.2"/><rect x="3" y="2.6" width="8" height="2" fill="#30f0f0"/><g fill="#000"><rect x="3" y="6" width="1.6" height="1.4"/><rect x="6" y="6" width="1.6" height="1.4"/><rect x="9" y="6" width="1.6" height="1.4"/><rect x="3" y="8.4" width="1.6" height="1.4"/><rect x="6" y="8.4" width="1.6" height="1.4"/><rect x="9" y="8.4" width="1.6" height="1.4"/><rect x="3" y="10.4" width="1.6" height="1"/><rect x="6" y="10.4" width="1.6" height="1"/><rect x="9" y="10.4" width="1.6" height="1"/></g></svg>
<div class="t b" style="left:66.8px;top:109px;letter-spacing:0.053px;">Obračuni</div>
<svg class="ic" style="left:129px;top:108px;width:16px" width="16" height="16" viewBox="0 0 16 16"><path d="M2.5 2 V14.6" stroke="#4a6a8a" stroke-width="1"/><path d="M0.3 11.6 L2.5 15 L4.7 11.6" fill="none" stroke="#4a5a6a" stroke-width="1"/><text x="4.8" y="7.8" font-family="Liberation Serif,serif" font-weight="bold" font-size="14.5" fill="#1a8a7a">a</text><text x="9.6" y="16" font-family="Liberation Serif,serif" font-weight="bold" font-size="14.5" fill="#8a2a9a">z</text></svg>
<div class="t " style="left:145.2px;top:109px;letter-spacing:-0.005px;">Kartice</div>
<svg class="ic" style="left:200px;top:108px;width:16px" width="16" height="16" viewBox="0 0 16 16"><text x="-0.3" y="7.8" font-family="Liberation Serif,serif" font-weight="bold" font-size="12.5" fill="#2a1a6a">o</text><text x="7.9" y="14.2" font-family="Liberation Serif,serif" font-weight="bold" font-size="12.5" fill="#2a1a6a">o</text><path d="M11.8 1.8 L3.2 13.8" stroke="#3a2a6a" stroke-width="1.1"/></svg>
<div class="t " style="left:215.5px;top:109px;letter-spacing:-0.265px;">Dažbine</div>
<svg class="ic" style="left:274px;top:108px;width:16px" width="16" height="16" viewBox="0 0 16 16"><path d="M0.6 0.8 H13 L15 3 V12 L12 15.4 H0.6Z" fill="#e4d8a8" stroke="#8a5a10" stroke-width="1.2"/><path d="M1.4 11 H13.8 L11.6 14.6 H1.4Z" fill="#c8b478"/><path d="M2 6.2 H8 V3.2 L13.4 7.4 L8 11.4 V8.8 H2Z" fill="#fde878" stroke="#a87a18" stroke-width=".8"/><rect x="13.6" y="5.6" width="2.6" height="3" fill="#2a6ad0"/></svg>
<div class="t " style="left:291px;top:109px;letter-spacing:-0.072px;">Osnovi</div>
<svg class="ic" style="left:343px;top:108px;width:16px" width="16" height="16" viewBox="0 0 16 16"><path d="M1.2 1.4 Q7 5 13 13.6" stroke="#000" stroke-width="1.6" fill="none"/><path d="M13.4 1 Q7 6 2.4 12.6" stroke="#000" stroke-width="2.2" fill="none"/><circle cx="13.4" cy="14" r=".6"/></svg>
<div class="t " style="left:359px;top:109px;letter-spacing:0.103px;">Obustave</div>
<div class="btn" style="left:52px;top:135px;width:20px;height:20px"></div>
<svg class="ic" style="left:54px;top:137px;width:16px" width="16" height="16" viewBox="0 0 16 16"><path d="M0.8 15.5 V12.6 Q0.8 10.4 3.4 10.2 L9 10.2 Q11.6 10.4 11.6 12.6 V15.5Z" fill="#f0a030" stroke="#d07a10" stroke-width=".7"/><ellipse cx="6.2" cy="5.8" rx="3.8" ry="4.6" fill="#f9b27a" stroke="#e58f4f" stroke-width=".6"/><path d="M2.6 4.6 Q6 -1.4 9.8 4.4 Q6 2.6 2.6 4.6Z" fill="#e8902a"/><circle cx="11.6" cy="11.8" r="3.8" fill="#2a5ae0" stroke="#e8f0ff" stroke-width=".7"/><path d="M11.6 9.4v1M11.6 11.2v3" stroke="#fff" stroke-width="1.4"/></svg>
<div class="btn" style="left:74px;top:133px;width:136px;height:21px"></div>
<div class="t " style="left:79.8px;top:137px;letter-spacing:-0.114px;">Opcije zaglavlja obrazaca</div>
<div class="btn" style="left:215px;top:133px;width:178px;height:21px"></div>
<div class="t " style="left:222.5px;top:137px;letter-spacing:-0.159px;">Definisanje izveštaja i SAP naloga</div>
<div class="cb" style="left:1118px;top:139px;border-color:#333"></div>
<div class="t " style="left:1132.6px;top:139px;letter-spacing:-0.132px;">svi virmani</div>
<div class="btn" style="left:1277px;top:133px;width:74px;height:21px"></div>
<div class="t " style="left:1291.2px;top:137px;letter-spacing:-0.038px;">Knjiženje</div>
<div class="a" style="left:45px;top:158px;width:1307px;height:445px;background:#f0f0f0;border:1px solid;border-color:#a0a0a0 #fff #fff #a0a0a0"></div>
<div class="a" style="left:46px;top:159px;width:1305px;height:443px;border:1px solid;border-color:#696969 #e3e3e3 #e3e3e3 #696969"></div>
<div class="hc" style="left:77px;width:159px"><div class="hl" style="top:2px;">Opis</div></div>
<div class="hc" style="left:236px;width:30px"><div class="hl" style="top:2px;">Zak.</div></div>
<div class="hc" style="left:266px;width:76px"><div class="hl" style="top:2px;">Šifra za<br>kumuliranje</div></div>
<div class="hc" style="left:342px;width:59px"><div class="hl" style="top:2px;">Tip</div></div>
<div class="hc" style="left:401px;width:45px"><div class="hl" style="top:2px;">Ulazi u<br>M4</div></div>
<div class="hc" style="left:446px;width:54px"><div class="hl" style="top:2px;">Datum</div></div>
<div class="hc" style="left:500px;width:51px"><div class="hl" style="top:2px;">Od<br>datuma</div></div>
<div class="hc" style="left:551px;width:52px"><div class="hl" style="top:2px;">Do<br>datuma</div></div>
<div class="hc" style="left:603px;width:49px"><div class="hl" style="top:2px;letter-spacing:-.1px;left:-8px;">Fond<br>časova</div></div>
<div class="hc" style="left:652px;width:32px"><div class="hl" style="top:2px;">Prok.</div></div>
<div class="hc" style="left:684px;width:90px"><div class="hl" style="top:2px;">Vrednost<br>koeficijenta</div></div>
<div class="hc" style="left:774px;width:67px"><div class="hl" style="top:2px;">Dnevni<br>iznos TO</div></div>
<div class="hc" style="left:841px;width:52px"><div class="hl" style="top:2px;">Datum<br>kredita</div></div>
<div class="hc" style="left:893px;width:57px"><div class="hl" style="top:2px;">Obustave</div></div>
<div class="hc" style="left:950px;width:73px"><div class="hl" style="top:2px;">5 X prosek</div></div>
<div class="hc" style="left:1023px;width:93px"><div class="hl" style="top:2px;">Min. neto<br>zarada po času</div></div>
<div class="hc" style="left:1116px;width:228px"><div class="hl" style="top:2px;">Isplatilac</div></div>
<div class="hc" style="left:1344px;width:6px;border-right:none"></div>
<div class="a" style="left:76px;top:160px;width:1px;height:150px;background:#a0a0a0"></div>
<div class="a" style="left:77px;top:188px;width:1273px;height:2px;background:#696969"></div>
<div class="a" style="left:76px;top:190px;width:1274px;height:120px;background:#a0a0a0"></div>
<div class="a" style="left:47px;top:190px;width:29px;height:1px;background:#a0a0a0"></div>
<div class="a" style="left:47px;top:207px;width:29px;height:1px;background:#a0a0a0"></div>
<div class="t r" style="left:47px;top:192px;width:28px;">1.</div>
<div class="cell" style="left:78px;top:192px;width:157px"></div>
<div class="t " style="left:78px;top:192px;">Januar 2016 akontacija</div>
<div class="a" style="left:236px;top:191px;width:29px;height:16px;background:#f0f0f0"></div>
<div class="cb" style="left:244px;top:192px;border-color:#333"><svg class="a" style="left:0;top:0" width="11" height="11" viewBox="0 0 11 11"><path d="M1.5 5.5 L4.2 8.3 L9.6 2.4" fill="none" stroke="#3a3a3a" stroke-width="1.2"/></svg></div>
<div class="cell" style="left:267px;top:192px;width:74px"></div>
<div class="t " style="left:267px;top:192px;">0116</div>
<div class="cell" style="left:343px;top:192px;width:57px"></div>
<div class="t  c" style="left:343px;top:192px;width:57px;letter-spacing:0.165px;">Akontacija</div>
<div class="a" style="left:401px;top:191px;width:44px;height:16px;background:#f0f0f0"></div>
<div class="cb" style="left:417px;top:192px;border-color:#333"><svg class="a" style="left:0;top:0" width="11" height="11" viewBox="0 0 11 11"><path d="M1.5 5.5 L4.2 8.3 L9.6 2.4" fill="none" stroke="#3a3a3a" stroke-width="1.2"/></svg></div>
<div class="cell" style="left:447px;top:192px;width:52px"></div>
<div class="t " style="left:449.2px;top:192px;letter-spacing:0.211px;">31.01.16</div>
<div class="cell" style="left:501px;top:192px;width:49px"></div>
<div class="t " style="left:503.2px;top:192px;letter-spacing:0.211px;">01.01.16</div>
<div class="cell" style="left:552px;top:192px;width:50px"></div>
<div class="t " style="left:554.2px;top:192px;letter-spacing:0.211px;">31.01.16</div>
<div class="cell" style="left:604px;top:192px;width:47px"></div>
<div class="t  r" style="left:604px;top:192px;width:46px;">176,00</div>
<div class="a" style="left:652px;top:191px;width:31px;height:16px;background:#f0f0f0"></div>
<div class="cb" style="left:661px;top:192px;border-color:#333"></div>
<div class="cell" style="left:685px;top:192px;width:88px"></div>
<div class="t  r" style="left:685px;top:192px;width:87px;">1000,0000000</div>
<div class="cell" style="left:775px;top:192px;width:65px"></div>
<div class="cell" style="left:842px;top:192px;width:50px"></div>
<div class="t " style="left:844.2px;top:192px;letter-spacing:0.211px;">01.02.15</div>
<div class="a" style="left:893px;top:191px;width:56px;height:16px;background:#f0f0f0"></div>
<div class="cb" style="left:915px;top:192px;border-color:#333"><svg class="a" style="left:0;top:0" width="11" height="11" viewBox="0 0 11 11"><path d="M1.5 5.5 L4.2 8.3 L9.6 2.4" fill="none" stroke="#3a3a3a" stroke-width="1.2"/></svg></div>
<div class="cell" style="left:951px;top:192px;width:71px"></div>
<div class="t  r" style="left:951px;top:192px;width:70px;">325.825,00</div>
<div class="cell" style="left:1024px;top:192px;width:91px"></div>
<div class="t  r" style="left:1024px;top:192px;width:90px;">121,00</div>
<div class="cell" style="left:1117px;top:192px;width:226px"></div>
<div class="t " style="left:1117px;top:192px;">Calculus d.o.o.</div>
<div class="cell" style="left:1345px;top:192px;width:5px"></div>
<div class="a" style="left:47px;top:224px;width:29px;height:1px;background:#a0a0a0"></div>
<div class="t r" style="left:47px;top:209px;width:28px;">2.</div>
<div class="cell" style="left:78px;top:209px;width:157px"></div>
<div class="t " style="left:78px;top:209px;">Januar 2016 prevoz</div>
<div class="a" style="left:236px;top:208px;width:29px;height:16px;background:#f0f0f0"></div>
<div class="cb" style="left:244px;top:209px;border-color:#333"><svg class="a" style="left:0;top:0" width="11" height="11" viewBox="0 0 11 11"><path d="M1.5 5.5 L4.2 8.3 L9.6 2.4" fill="none" stroke="#3a3a3a" stroke-width="1.2"/></svg></div>
<div class="cell" style="left:267px;top:209px;width:74px"></div>
<div class="cell" style="left:343px;top:209px;width:57px"></div>
<div class="t  c" style="left:343px;top:209px;width:57px;letter-spacing:-0.184px;">Obračun</div>
<div class="a" style="left:401px;top:208px;width:44px;height:16px;background:#f0f0f0"></div>
<div class="cb" style="left:417px;top:209px;border-color:#333"><svg class="a" style="left:0;top:0" width="11" height="11" viewBox="0 0 11 11"><path d="M1.5 5.5 L4.2 8.3 L9.6 2.4" fill="none" stroke="#3a3a3a" stroke-width="1.2"/></svg></div>
<div class="cell" style="left:447px;top:209px;width:52px"></div>
<div class="t " style="left:449.2px;top:209px;letter-spacing:0.211px;">31.01.16</div>
<div class="cell" style="left:501px;top:209px;width:49px"></div>
<div class="t " style="left:503.2px;top:209px;letter-spacing:0.211px;">01.01.16</div>
<div class="cell" style="left:552px;top:209px;width:50px"></div>
<div class="t " style="left:554.2px;top:209px;letter-spacing:0.211px;">31.01.16</div>
<div class="cell" style="left:604px;top:209px;width:47px"></div>
<div class="t  r" style="left:604px;top:209px;width:46px;">176,00</div>
<div class="a" style="left:652px;top:208px;width:31px;height:16px;background:#f0f0f0"></div>
<div class="cb" style="left:661px;top:209px;border-color:#333"></div>
<div class="cell" style="left:685px;top:209px;width:88px"></div>
<div class="cell" style="left:775px;top:209px;width:65px"></div>
<div class="cell" style="left:842px;top:209px;width:50px"></div>
<div class="t " style="left:844.2px;top:209px;letter-spacing:0.211px;">31.01.15</div>
<div class="a" style="left:893px;top:208px;width:56px;height:16px;background:#f0f0f0"></div>
<div class="cb" style="left:915px;top:209px;border-color:#333"><svg class="a" style="left:0;top:0" width="11" height="11" viewBox="0 0 11 11"><path d="M1.5 5.5 L4.2 8.3 L9.6 2.4" fill="none" stroke="#3a3a3a" stroke-width="1.2"/></svg></div>
<div class="cell" style="left:951px;top:209px;width:71px"></div>
<div class="t  r" style="left:951px;top:209px;width:70px;">325.825,00</div>
<div class="cell" style="left:1024px;top:209px;width:91px"></div>
<div class="cell" style="left:1117px;top:209px;width:226px"></div>
<div class="t " style="left:1117px;top:209px;">Calculus d.o.o.</div>
<div class="cell" style="left:1345px;top:209px;width:5px"></div>
<div class="a" style="left:47px;top:241px;width:29px;height:1px;background:#a0a0a0"></div>
<div class="t r" style="left:47px;top:226px;width:28px;">3.</div>
<div class="cell" style="left:78px;top:226px;width:157px"></div>
<div class="t " style="left:78px;top:226px;">Januar 2016 konacni obracun</div>
<div class="a" style="left:236px;top:225px;width:29px;height:16px;background:#f0f0f0"></div>
<div class="cb" style="left:244px;top:226px;border-color:#333"><svg class="a" style="left:0;top:0" width="11" height="11" viewBox="0 0 11 11"><path d="M1.5 5.5 L4.2 8.3 L9.6 2.4" fill="none" stroke="#3a3a3a" stroke-width="1.2"/></svg></div>
<div class="cell" style="left:267px;top:226px;width:74px"></div>
<div class="t " style="left:267px;top:226px;">0116</div>
<div class="cell" style="left:343px;top:226px;width:57px"></div>
<div class="t  c" style="left:343px;top:226px;width:57px;letter-spacing:-0.184px;">Obračun</div>
<div class="a" style="left:401px;top:225px;width:44px;height:16px;background:#f0f0f0"></div>
<div class="cb" style="left:417px;top:226px;border-color:#333"><svg class="a" style="left:0;top:0" width="11" height="11" viewBox="0 0 11 11"><path d="M1.5 5.5 L4.2 8.3 L9.6 2.4" fill="none" stroke="#3a3a3a" stroke-width="1.2"/></svg></div>
<div class="cell" style="left:447px;top:226px;width:52px"></div>
<div class="t " style="left:449.2px;top:226px;letter-spacing:0.211px;">31.01.16</div>
<div class="cell" style="left:501px;top:226px;width:49px"></div>
<div class="t " style="left:503.2px;top:226px;letter-spacing:0.211px;">01.01.16</div>
<div class="cell" style="left:552px;top:226px;width:50px"></div>
<div class="t " style="left:554.2px;top:226px;letter-spacing:0.211px;">31.01.16</div>
<div class="cell" style="left:604px;top:226px;width:47px"></div>
<div class="t  r" style="left:604px;top:226px;width:46px;">176,00</div>
<div class="a" style="left:652px;top:225px;width:31px;height:16px;background:#f0f0f0"></div>
<div class="cb" style="left:661px;top:226px;border-color:#333"></div>
<div class="cell" style="left:685px;top:226px;width:88px"></div>
<div class="t  r" style="left:685px;top:226px;width:87px;">1000,0000000</div>
<div class="cell" style="left:775px;top:226px;width:65px"></div>
<div class="t  r" style="left:775px;top:226px;width:64px;">250,0000</div>
<div class="cell" style="left:842px;top:226px;width:50px"></div>
<div class="t " style="left:844.2px;top:226px;letter-spacing:0.211px;">01.01.15</div>
<div class="a" style="left:893px;top:225px;width:56px;height:16px;background:#f0f0f0"></div>
<div class="cb" style="left:915px;top:226px;border-color:#333"><svg class="a" style="left:0;top:0" width="11" height="11" viewBox="0 0 11 11"><path d="M1.5 5.5 L4.2 8.3 L9.6 2.4" fill="none" stroke="#3a3a3a" stroke-width="1.2"/></svg></div>
<div class="cell" style="left:951px;top:226px;width:71px"></div>
<div class="t  r" style="left:951px;top:226px;width:70px;">325.825,00</div>
<div class="cell" style="left:1024px;top:226px;width:91px"></div>
<div class="t  r" style="left:1024px;top:226px;width:90px;">121,00</div>
<div class="cell" style="left:1117px;top:226px;width:226px"></div>
<div class="t " style="left:1117px;top:226px;">Calculus d.o.o.</div>
<div class="cell" style="left:1345px;top:226px;width:5px"></div>
<div class="a" style="left:47px;top:258px;width:29px;height:1px;background:#a0a0a0"></div>
<div class="t r" style="left:47px;top:243px;width:28px;">4.</div>
<div class="cell" style="left:78px;top:243px;width:157px"></div>
<div class="t " style="left:78px;top:243px;">Februar 2016 akontacija</div>
<div class="a" style="left:236px;top:242px;width:29px;height:16px;background:#f0f0f0"></div>
<div class="cb" style="left:244px;top:243px;border-color:#333"><svg class="a" style="left:0;top:0" width="11" height="11" viewBox="0 0 11 11"><path d="M1.5 5.5 L4.2 8.3 L9.6 2.4" fill="none" stroke="#3a3a3a" stroke-width="1.2"/></svg></div>
<div class="cell" style="left:267px;top:243px;width:74px"></div>
<div class="t " style="left:267px;top:243px;">0216</div>
<div class="cell" style="left:343px;top:243px;width:57px"></div>
<div class="t  c" style="left:343px;top:243px;width:57px;letter-spacing:0.165px;">Akontacija</div>
<div class="a" style="left:401px;top:242px;width:44px;height:16px;background:#f0f0f0"></div>
<div class="cb" style="left:417px;top:243px;border-color:#333"><svg class="a" style="left:0;top:0" width="11" height="11" viewBox="0 0 11 11"><path d="M1.5 5.5 L4.2 8.3 L9.6 2.4" fill="none" stroke="#3a3a3a" stroke-width="1.2"/></svg></div>
<div class="cell" style="left:447px;top:243px;width:52px"></div>
<div class="t " style="left:449.2px;top:243px;letter-spacing:0.211px;">29.02.16</div>
<div class="cell" style="left:501px;top:243px;width:49px"></div>
<div class="t " style="left:503.2px;top:243px;letter-spacing:0.211px;">01.02.16</div>
<div class="cell" style="left:552px;top:243px;width:50px"></div>
<div class="t " style="left:554.2px;top:243px;letter-spacing:0.211px;">29.02.16</div>
<div class="cell" style="left:604px;top:243px;width:47px"></div>
<div class="t  r" style="left:604px;top:243px;width:46px;">176,00</div>
<div class="a" style="left:652px;top:242px;width:31px;height:16px;background:#f0f0f0"></div>
<div class="cb" style="left:661px;top:243px;border-color:#333"></div>
<div class="cell" style="left:685px;top:243px;width:88px"></div>
<div class="t  r" style="left:685px;top:243px;width:87px;">1000,0000000</div>
<div class="cell" style="left:775px;top:243px;width:65px"></div>
<div class="cell" style="left:842px;top:243px;width:50px"></div>
<div class="t " style="left:844.2px;top:243px;letter-spacing:0.211px;">01.02.15</div>
<div class="a" style="left:893px;top:242px;width:56px;height:16px;background:#f0f0f0"></div>
<div class="cb" style="left:915px;top:243px;border-color:#333"><svg class="a" style="left:0;top:0" width="11" height="11" viewBox="0 0 11 11"><path d="M1.5 5.5 L4.2 8.3 L9.6 2.4" fill="none" stroke="#3a3a3a" stroke-width="1.2"/></svg></div>
<div class="cell" style="left:951px;top:243px;width:71px"></div>
<div class="t  r" style="left:951px;top:243px;width:70px;">325.825,00</div>
<div class="cell" style="left:1024px;top:243px;width:91px"></div>
<div class="t  r" style="left:1024px;top:243px;width:90px;">121,00</div>
<div class="cell" style="left:1117px;top:243px;width:226px"></div>
<div class="t " style="left:1117px;top:243px;">Calculus d.o.o.</div>
<div class="cell" style="left:1345px;top:243px;width:5px"></div>
<div class="a" style="left:47px;top:275px;width:29px;height:1px;background:#a0a0a0"></div>
<div class="t r" style="left:47px;top:260px;width:28px;">5.</div>
<div class="cell" style="left:78px;top:260px;width:157px"></div>
<div class="t " style="left:78px;top:260px;">Februar 2016 porodiljsko</div>
<div class="a" style="left:236px;top:259px;width:29px;height:16px;background:#f0f0f0"></div>
<div class="cb" style="left:244px;top:260px;border-color:#333"></div>
<div class="cell" style="left:267px;top:260px;width:74px"></div>
<div class="cell" style="left:343px;top:260px;width:57px"></div>
<div class="t  c" style="left:343px;top:260px;width:57px;letter-spacing:-0.184px;">Obračun</div>
<div class="a" style="left:401px;top:259px;width:44px;height:16px;background:#f0f0f0"></div>
<div class="cb" style="left:417px;top:260px;border-color:#333"><svg class="a" style="left:0;top:0" width="11" height="11" viewBox="0 0 11 11"><path d="M1.5 5.5 L4.2 8.3 L9.6 2.4" fill="none" stroke="#3a3a3a" stroke-width="1.2"/></svg></div>
<div class="cell" style="left:447px;top:260px;width:52px"></div>
<div class="t " style="left:449.2px;top:260px;letter-spacing:0.211px;">29.02.16</div>
<div class="cell" style="left:501px;top:260px;width:49px"></div>
<div class="t " style="left:503.2px;top:260px;letter-spacing:0.211px;">01.02.16</div>
<div class="cell" style="left:552px;top:260px;width:50px"></div>
<div class="t " style="left:554.2px;top:260px;letter-spacing:0.211px;">29.02.16</div>
<div class="cell" style="left:604px;top:260px;width:47px"></div>
<div class="t  r" style="left:604px;top:260px;width:46px;">168,00</div>
<div class="a" style="left:652px;top:259px;width:31px;height:16px;background:#f0f0f0"></div>
<div class="cb" style="left:661px;top:260px;border-color:#333"></div>
<div class="cell" style="left:685px;top:260px;width:88px"></div>
<div class="t  r" style="left:685px;top:260px;width:87px;">1000,0000000</div>
<div class="cell" style="left:775px;top:260px;width:65px"></div>
<div class="cell" style="left:842px;top:260px;width:50px"></div>
<div class="t " style="left:844.2px;top:260px;letter-spacing:0.211px;">28.02.15</div>
<div class="a" style="left:893px;top:259px;width:56px;height:16px;background:#f0f0f0"></div>
<div class="cb" style="left:915px;top:260px;border-color:#333"><svg class="a" style="left:0;top:0" width="11" height="11" viewBox="0 0 11 11"><path d="M1.5 5.5 L4.2 8.3 L9.6 2.4" fill="none" stroke="#3a3a3a" stroke-width="1.2"/></svg></div>
<div class="cell" style="left:951px;top:260px;width:71px"></div>
<div class="t  r" style="left:951px;top:260px;width:70px;">325.825,00</div>
<div class="cell" style="left:1024px;top:260px;width:91px"></div>
<div class="t  r" style="left:1024px;top:260px;width:90px;">121,00</div>
<div class="cell" style="left:1117px;top:260px;width:226px"></div>
<div class="t " style="left:1117px;top:260px;">Calculus d.o.o.</div>
<div class="cell" style="left:1345px;top:260px;width:5px"></div>
<div class="a" style="left:47px;top:292px;width:29px;height:1px;background:#a0a0a0"></div>
<div class="a" style="left:47px;top:276px;width:29px;height:16px;background:#3399ff"></div>
<div class="t r w" style="left:47px;top:277px;width:28px;">6.</div>
<div class="cell sel" style="left:78px;top:277px;width:157px"></div>
<div class="t w" style="left:78px;top:277px;">Februar 2016 konacni obracun</div>
<div class="a" style="left:236px;top:276px;width:29px;height:16px;background:#3399ff"></div>
<div class="cb" style="left:244px;top:277px;border-color:#333"></div>
<div class="cell sel" style="left:267px;top:277px;width:74px"></div>
<div class="t w" style="left:267px;top:277px;">0216</div>
<div class="cell sel" style="left:343px;top:277px;width:57px"></div>
<div class="t w c" style="left:343px;top:277px;width:57px;letter-spacing:-0.184px;">Obračun</div>
<div class="a" style="left:401px;top:276px;width:44px;height:16px;background:#3399ff"></div>
<div class="cb" style="left:417px;top:277px;border-color:#333"><svg class="a" style="left:0;top:0" width="11" height="11" viewBox="0 0 11 11"><path d="M1.5 5.5 L4.2 8.3 L9.6 2.4" fill="none" stroke="#3a3a3a" stroke-width="1.2"/></svg></div>
<div class="cell sel" style="left:447px;top:277px;width:52px"></div>
<div class="t w" style="left:449.2px;top:277px;letter-spacing:0.211px;">29.02.16</div>
<div class="cell sel" style="left:501px;top:277px;width:49px"></div>
<div class="t w" style="left:503.2px;top:277px;letter-spacing:0.211px;">01.02.16</div>
<div class="cell sel" style="left:552px;top:277px;width:50px"></div>
<div class="t w" style="left:554.2px;top:277px;letter-spacing:0.211px;">29.02.16</div>
<div class="cell sel" style="left:604px;top:277px;width:47px"></div>
<div class="t w r" style="left:604px;top:277px;width:46px;">176,00</div>
<div class="a" style="left:652px;top:276px;width:31px;height:16px;background:#3399ff"></div>
<div class="cb" style="left:661px;top:277px;border-color:#333"></div>
<div class="cell sel" style="left:685px;top:277px;width:88px"></div>
<div class="t w r" style="left:685px;top:277px;width:87px;">1000,0000000</div>
<div class="cell sel" style="left:775px;top:277px;width:65px"></div>
<div class="t w r" style="left:775px;top:277px;width:64px;">250,0000</div>
<div class="cell sel" style="left:842px;top:277px;width:50px"></div>
<div class="t w" style="left:844.2px;top:277px;letter-spacing:0.211px;">01.01.15</div>
<div class="a" style="left:893px;top:276px;width:56px;height:16px;background:#3399ff"></div>
<div class="cb" style="left:915px;top:277px;border-color:#333"><svg class="a" style="left:0;top:0" width="11" height="11" viewBox="0 0 11 11"><path d="M1.5 5.5 L4.2 8.3 L9.6 2.4" fill="none" stroke="#3a3a3a" stroke-width="1.2"/></svg></div>
<div class="cell sel" style="left:951px;top:277px;width:71px"></div>
<div class="t w r" style="left:951px;top:277px;width:70px;">325.825,00</div>
<div class="cell sel" style="left:1024px;top:277px;width:91px"></div>
<div class="t w r" style="left:1024px;top:277px;width:90px;">121,00</div>
<div class="cell sel" style="left:1117px;top:277px;width:226px"></div>
<div class="t w" style="left:1117px;top:277px;">Calculus d.o.o.</div>
<div class="cell sel" style="left:1345px;top:277px;width:5px"></div>
<div class="a" style="left:47px;top:309px;width:29px;height:1px;background:#a0a0a0"></div>
<div class="t r" style="left:47px;top:294px;width:28px;">7.</div>
<div class="cell" style="left:78px;top:294px;width:157px"></div>
<div class="t " style="left:78px;top:294px;">Maj 2016 ugovor o delu</div>
<div class="a" style="left:236px;top:293px;width:29px;height:16px;background:#f0f0f0"></div>
<div class="cb" style="left:244px;top:294px;border-color:#333"></div>
<div class="cell" style="left:267px;top:294px;width:74px"></div>
<div class="cell" style="left:343px;top:294px;width:57px"></div>
<div class="t  c" style="left:343px;top:294px;width:57px;letter-spacing:-0.184px;">Obračun</div>
<div class="a" style="left:401px;top:293px;width:44px;height:16px;background:#f0f0f0"></div>
<div class="cb" style="left:417px;top:294px;border-color:#333"><svg class="a" style="left:0;top:0" width="11" height="11" viewBox="0 0 11 11"><path d="M1.5 5.5 L4.2 8.3 L9.6 2.4" fill="none" stroke="#3a3a3a" stroke-width="1.2"/></svg></div>
<div class="cell" style="left:447px;top:294px;width:52px"></div>
<div class="t " style="left:449.2px;top:294px;letter-spacing:0.211px;">05.06.16</div>
<div class="cell" style="left:501px;top:294px;width:49px"></div>
<div class="t " style="left:503.2px;top:294px;letter-spacing:0.211px;">01.05.16</div>
<div class="cell" style="left:552px;top:294px;width:50px"></div>
<div class="t " style="left:554.2px;top:294px;letter-spacing:0.211px;">31.05.16</div>
<div class="cell" style="left:604px;top:294px;width:47px"></div>
<div class="t  r" style="left:604px;top:294px;width:46px;">176,00</div>
<div class="a" style="left:652px;top:293px;width:31px;height:16px;background:#f0f0f0"></div>
<div class="cb" style="left:661px;top:294px;border-color:#333"></div>
<div class="cell" style="left:685px;top:294px;width:88px"></div>
<div class="cell" style="left:775px;top:294px;width:65px"></div>
<div class="cell" style="left:842px;top:294px;width:50px"></div>
<div class="t " style="left:844.2px;top:294px;letter-spacing:0.211px;">05.08.15</div>
<div class="a" style="left:893px;top:293px;width:56px;height:16px;background:#f0f0f0"></div>
<div class="cb" style="left:915px;top:294px;border-color:#333"><svg class="a" style="left:0;top:0" width="11" height="11" viewBox="0 0 11 11"><path d="M1.5 5.5 L4.2 8.3 L9.6 2.4" fill="none" stroke="#3a3a3a" stroke-width="1.2"/></svg></div>
<div class="cell" style="left:951px;top:294px;width:71px"></div>
<div class="t  r" style="left:951px;top:294px;width:70px;">325.825,00</div>
<div class="cell" style="left:1024px;top:294px;width:91px"></div>
<div class="cell" style="left:1117px;top:294px;width:226px"></div>
<div class="t " style="left:1117px;top:294px;">Calculus d.o.o.</div>
<div class="cell" style="left:1345px;top:294px;width:5px"></div>
<svg class="ic" style="left:47px;top:276px;width:24px" width="24" height="16" viewBox="0 0 24 16"><rect x="0" y="5.5" width="4" height="10.5" fill="#fff" stroke="#e8dcb8" stroke-width=".6"/><path d="M5 16 V8 L8.5 5 H13.5 L14.5 6.4 H22 Q23 7.4 22 8.6 H17.8 V10 Q18.6 10.6 17.8 11.4 V12.8 Q18.6 13.4 17.8 14.2 V16Z" fill="#e0dcc0" stroke="#c89858" stroke-width=".9"/><path d="M13 9.2 H22 M13 11.6 H17.6 M13 14 H17.6" stroke="#c89858" stroke-width=".9"/><path d="M9 5.6 H13.4 L14.4 7 H21.6 L21.6 8 H13 Z" fill="#fff"/></svg>
<div class="a" style="left:47px;top:584px;width:1303px;height:17px;background:#f0f0f0;border-top:1px solid #fff"></div>
<div class="a" style="left:47px;top:584px;width:10px;height:17px;background:#696969"></div>
<div class="a" style="left:74px;top:585px;width:848px;height:15px;background:#cdcdcd"></div>
<svg class="a" style="left:60px;top:587px" width="10" height="11" viewBox="0 0 10 11"><path d="M8 2 L5.2 2 L2 5.5 L5.2 9 L8 9 L4.8 5.5Z" fill="#444"/></svg>
<svg class="a" style="left:1337px;top:587px" width="10" height="11" viewBox="0 0 10 11"><path d="M2 2 L4.8 2 L8 5.5 L4.8 9 L2 9 L5.2 5.5Z" fill="#444"/></svg>
<div class="a" style="left:45px;top:603px;width:1307px;height:128px;background:#f0f0f0;border:1px solid;border-color:#a0a0a0 #fff #fff #a0a0a0"></div>
<div class="a" style="left:46px;top:604px;width:1305px;height:126px;border:1px solid;border-color:#696969 #e3e3e3 #e3e3e3 #696969"></div>
<div class="t b" style="left:51.8px;top:607px;letter-spacing:-0.458px;">Opis:</div>
<div class="inp" style="left:82px;top:606px;width:114px;overflow:hidden"></div>
<div class="t" style="left:83px;top:607px;width:112px;overflow:hidden">Februar 2016 konacni obracun</div>
<div class="t b" style="left:205.4px;top:607px;letter-spacing:0.201px;">Od datuma:</div>
<div class="inp" style="left:275px;top:606px;width:53px;height:16px"></div>
<div class="t c" style="left:275px;top:607px;width:53px;">01.02.16</div>
<div class="t b" style="left:336.4px;top:607px;letter-spacing:0.225px;">Do datuma:</div>
<div class="inp" style="left:405px;top:606px;width:54px;height:16px"></div>
<div class="t c" style="left:405px;top:607px;width:54px;">29.02.16</div>
<div class="t b" style="left:465.0px;top:607px;letter-spacing:0.282px;">Datum:</div>
<div class="inp" style="left:510px;top:606px;width:52px;height:16px"></div>
<div class="t c" style="left:510px;top:607px;width:52px;">29.02.16</div>
<div class="cb" style="left:585px;top:607px;border-color:#333"><svg class="a" style="left:0;top:0" width="11" height="11" viewBox="0 0 11 11"><path d="M1.5 5.5 L4.2 8.3 L9.6 2.4" fill="none" stroke="#3a3a3a" stroke-width="1.2"/></svg></div>
<div class="t b" style="left:601.4px;top:607px;letter-spacing:0.067px;">Ulazi u M4</div>
<div class="cb" style="left:680px;top:607px;border-color:#333"></div>
<div class="t b" style="left:696.4px;top:607px;letter-spacing:0.248px;">Proknjiženo</div>
<div class="t b" style="left:59.0px;top:627px;letter-spacing:-0.241px;">Tip:</div>
<div class="inp" style="left:82px;top:626px;width:91px;height:16px"></div>
<div class="t c" style="left:82px;top:627px;width:91px;">Obračun</div>
<div class="t b" style="left:341.4px;top:627px;letter-spacing:0.211px;">Šifra za kumuliranje:</div>
<div class="inp" style="left:462px;top:626px;width:79px;height:16px"></div>
<div class="t " style="left:463px;top:627px;">0216</div>
<div class="t b" style="left:562.4px;top:627px;letter-spacing:0.120px;">Pros. zarada u državi:</div>
<div class="inp" style="left:688px;top:626px;width:77px;height:16px"></div>
<div class="t r" style="left:688px;top:627px;width:75px;">65.165,00</div>
<div class="t b" style="left:53.4px;top:647px;letter-spacing:-0.018px;">Fond časova:</div>
<div class="inp" style="left:130px;top:646px;width:59px;height:16px"></div>
<div class="t r" style="left:130px;top:647px;width:57px;">176,00</div>
<div class="t b" style="left:209.4px;top:647px;letter-spacing:0.260px;">Isplatilac:</div>
<div class="inp" style="left:275px;top:646px;width:258px;height:16px"></div>
<div class="t " style="left:276px;top:647px;">Calculus d.o.o.</div>
<div class="t b" style="left:540.8px;top:647px;letter-spacing:0.101px;">Min. neto zarada po času:</div>
<div class="inp" style="left:688px;top:646px;width:77px;height:16px"></div>
<div class="t r" style="left:688px;top:647px;width:75px;">121,00</div>
<div class="t b" style="left:64.4px;top:667px;letter-spacing:0.082px;">5 X prosek:</div>
<div class="inp" style="left:130px;top:666px;width:77px;height:16px"></div>
<div class="t r" style="left:130px;top:667px;width:75px;">325.825,00</div>
<div class="t b" style="left:220.4px;top:667px;letter-spacing:0.246px;">Vrednost koeficijenta:</div>
<div class="inp" style="left:348px;top:666px;width:98px;height:16px"></div>
<div class="t r" style="left:348px;top:667px;width:96px;">1.000,0000000</div>
<div class="t b" style="left:469.4px;top:667px;letter-spacing:0.142px;">Napomena:</div>
<div class="inp" style="left:536px;top:665px;width:229px;height:16px"></div>
<div class="t b" style="left:55.4px;top:687px;letter-spacing:-0.075px;">Dnevni iznos TO:</div>
<div class="inp" style="left:150px;top:686px;width:73px;height:16px"></div>
<div class="t r" style="left:150px;top:687px;width:71px;">250,0000</div>
<div class="t b" style="left:228.4px;top:687px;letter-spacing:0.385px;">Datum kredita:</div>
<div class="inp" style="left:316px;top:686px;width:54px;height:16px"></div>
<div class="t c" style="left:316px;top:687px;width:54px;">01.01.15</div>
<div class="cb" style="left:374px;top:687px;border-color:#333"><svg class="a" style="left:0;top:0" width="11" height="11" viewBox="0 0 11 11"><path d="M1.5 5.5 L4.2 8.3 L9.6 2.4" fill="none" stroke="#3a3a3a" stroke-width="1.2"/></svg></div>
<div class="t b" style="left:390.4px;top:687px;letter-spacing:0.187px;">Obustave</div>
<div class="cb" style="left:449px;top:687px;border-color:#333"></div>
<div class="t b" style="left:464.4px;top:687px;letter-spacing:0.283px;">Zaključano</div>
<div class="t " style="left:657.4px;top:687px;letter-spacing:-0.222px;">Virman za invalide:</div>
<div class="cb" style="left:751px;top:687px;border-color:#333"></div>
<div class="t b" style="left:53.0px;top:707px;letter-spacing:0.172px;">Tehnika obračuna:</div>
<div class="inp" style="left:160px;top:706px;width:148px;height:16px"></div>
<div class="t " style="left:161px;top:707px;">Zaposleni (Srbija 01.09.2004)</div>
<div class="t b" style="left:314.4px;top:707px;letter-spacing:-0.226px;">Kurs:</div>
<div class="inp" style="left:350px;top:706px;width:74px;height:16px"></div>
<div class="t c" style="left:350px;top:707px;width:74px;">Srednji kurs</div>
<div class="t b" style="left:432.4px;top:707px;letter-spacing:0.371px;">Valuta:</div>
<div class="inp" style="left:479px;top:706px;width:55px;height:16px"></div>
<div class="t c" style="left:479px;top:707px;width:55px;">DIN</div>
<div class="t b" style="left:542.4px;top:707px;letter-spacing:0.256px;">Vrsta:</div>
<div class="inp" style="left:584px;top:706px;width:181px;height:16px"></div>
<div class="t " style="left:585px;top:707px;">Obračun zarada</div>
<div class="a" style="left:388px;top:42px;width:244px;height:240px;background:#f2f2f2;border:1px solid #ccc;box-shadow:3px 3px 4px rgba(0,0,0,.45)">
<div class="mi" style="top:2px;left:2px;letter-spacing:-0.159px;">Linija tastera ...</div>
<div class="mi" style="top:24px;left:2px;letter-spacing:-0.124px;">Izgled prozora</div>
<div class="a" style="left:31px;top:49px;width:209px;height:1px;background:#d7d7d7"></div>
<div class="mi" style="top:53px;left:2px;letter-spacing:-0.011px;">Opcije programa...</div>
<div class="mi" style="top:75px;left:2px;letter-spacing:-0.038px;">Opcije prozora</div>
<div class="mi" style="top:97px;left:2px;letter-spacing:-0.014px;">Snimi/Vrati izgled prozora</div>
<div class="mi" style="top:119px;left:2px;letter-spacing:0.000px;">Vrati originalni izgled prozora</div>
<div class="a" style="left:31px;top:144px;width:209px;height:1px;background:#d7d7d7"></div>
<div class="mi" style="top:148px;left:2px;letter-spacing:-0.102px;">Zastita - Licenca</div>
<div class="mi" style="top:170px;left:2px;letter-spacing:-0.087px;">Izgled</div>
<div class="mi" style="top:192px;left:2px;letter-spacing:-0.118px;background:#91c9f7;">Provera obracuna</div>
<div class="mi" style="top:214px;left:2px;letter-spacing:-0.169px;">Preuzimanja ...</div>
<svg class="a" style="left:224px;top:30px" width="8" height="9" viewBox="0 0 8 9"><path d="M2.2 1 L5.6 4.5 L2.2 8" fill="none" stroke="#222" stroke-width="1.3"/></svg>
</div>
</body></html>
